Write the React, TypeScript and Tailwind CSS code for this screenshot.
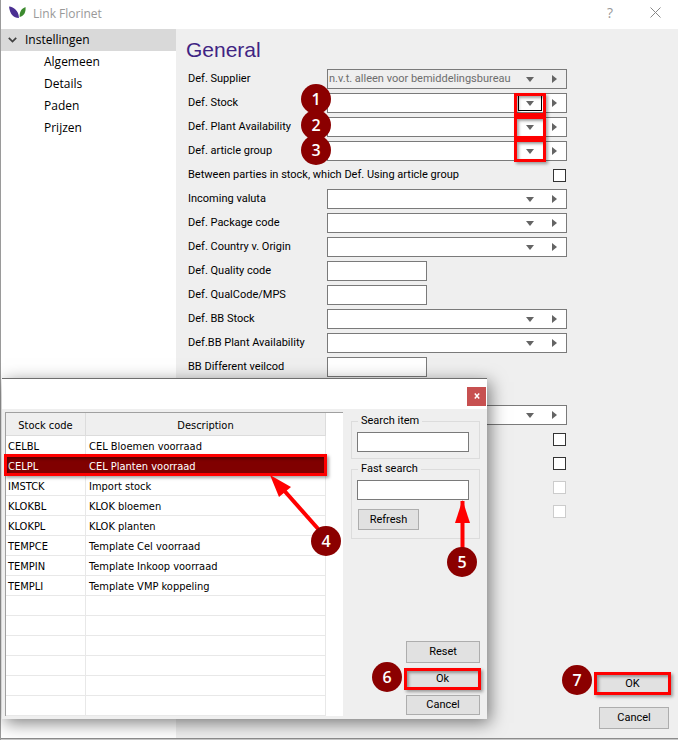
import React from "react";

type Row = {
  id: string;
  label?: string;
  name?: string;
  kind: "combo" | "text" | "check" | "none";
  value?: string;
  disabled?: boolean;
  active?: boolean;
  marked?: boolean;
};

const rows: Row[] = [
  { id: "supplier", label: "Def. Supplier", kind: "combo", value: "n.v.t. alleen voor bemiddelingsbureau", disabled: true },
  { id: "stock", label: "Def. Stock", kind: "combo", active: true, marked: true },
  { id: "plant", label: "Def. Plant Availability", kind: "combo" },
  { id: "article", label: "Def. article group", kind: "combo" },
  { id: "between", label: "Between parties in stock, which Def. Using article group", kind: "check" },
  { id: "valuta", label: "Incoming valuta", kind: "combo" },
  { id: "package", label: "Def. Package code", kind: "combo" },
  { id: "country", label: "Def. Country v. Origin", kind: "combo" },
  { id: "quality", label: "Def. Quality code", kind: "text" },
  { id: "qualmps", label: "Def. QualCode/MPS", kind: "text" },
  { id: "bbstock", label: "Def. BB Stock", kind: "combo" },
  { id: "bbplant", label: "Def.BB Plant Availability", kind: "combo" },
  { id: "veilcod", label: "BB Different veilcod", kind: "text" },
  { id: "spacer", kind: "none" },
  { id: "extra", name: "Extra setting", kind: "combo" },
  { id: "opt1", name: "Option 1", kind: "check" },
  { id: "opt2", name: "Option 2", kind: "check" },
  { id: "opt3", name: "Option 3", kind: "check", disabled: true },
  { id: "opt4", name: "Option 4", kind: "check", disabled: true },
];

const stock = [
  ["CELBL", "CEL Bloemen voorraad"],
  ["CELPL", "CEL Planten voorraad"],
  ["IMSTCK", "Import stock"],
  ["KLOKBL", "KLOK bloemen"],
  ["KLOKPL", "KLOK planten"],
  ["TEMPCE", "Template Cel voorraad"],
  ["TEMPIN", "Template Inkoop voorraad"],
  ["TEMPLI", "Template VMP koppeling"],
  ["", ""],
  ["", ""],
  ["", ""],
  ["", ""],
  ["", ""],
  ["", ""],
];

const markShadow =
  "border-3 border-[#ff0000] shadow-[2px_2px_3px_rgba(0,0,0,0.35),inset_2px_2px_3px_rgba(0,0,0,0.35)]";

function Badge({ n, className }: { n: number; className: string }) {
  return (
    <span
      className={`pointer-events-none absolute z-20 flex size-[30px] items-center justify-center rounded-full bg-[#8b0000] font-['Open_Sans',sans-serif] text-base font-semibold text-white ${className}`}
    >
      {n}
    </span>
  );
}

function Combo({ row }: { row: Row }) {
  return (
    <div
      className={`relative flex h-5 w-[240px] border border-[#7a7a7a] ${row.disabled ? "bg-[#efefef]" : "bg-white"}`}
    >
      <select
        id={row.id}
        aria-label={row.name}
        disabled={row.disabled}
        className="min-w-0 flex-1 appearance-none bg-transparent pl-px text-[11px] leading-4 text-[#6d6d6d] opacity-100 outline-none"
      >
        <option>{row.value ?? ""}</option>
      </select>
      <span
        className={`pointer-events-none absolute top-px right-6 flex h-4 w-6 items-center justify-center ${row.active ? "border border-black" : ""}`}
      >
        <svg width="8" height="5" viewBox="0 0 8 5">
          <path d="M0 0h8L4 5z" fill="#646464" />
        </svg>
      </span>
      <button type="button" aria-label="Open" className="flex w-6 items-center justify-center">
        <svg width="5" height="8" viewBox="0 0 5 8">
          <path d="M0 0v8l5-4z" fill="#646464" />
        </svg>
      </button>
      {row.marked && (
        <span className="pointer-events-none absolute -top-px right-5 z-10 flex w-8 flex-col">
          <span className={`h-[23px] ${markShadow}`} />
          <span className={`h-[23px] ${markShadow}`} />
          <span className={`h-[23px] ${markShadow}`} />
        </span>
      )}
    </div>
  );
}

function Field({ row }: { row: Row }) {
  return (
    <div className="flex h-6 w-[379px] items-center">
      {row.label && (
        <label htmlFor={row.id} className="w-[139px] shrink-0 whitespace-nowrap">
          {row.label}
        </label>
      )}
      <div className={`flex ${row.kind === "text" ? "" : "ml-auto"}`}>
        {row.kind === "combo" && <Combo row={row} />}
        {row.kind === "text" && (
          <input id={row.id} type="text" className="h-5 w-[100px] border border-[#7a7a7a] bg-white px-1" />
        )}
        {row.kind === "check" && (
          <input
            id={row.id}
            type="checkbox"
            aria-label={row.name}
            disabled={row.disabled}
            className="mr-px size-[13px] appearance-none border border-[#333333] bg-white disabled:border-[#cccccc]"
          />
        )}
      </div>
    </div>
  );
}

function PushButton({ children, className }: { children: string; className: string }) {
  return (
    <button type="button" className={`border border-[#adadad] bg-[#e1e1e1] ${className}`}>
      {children}
    </button>
  );
}

function StockDialog() {
  return (
    <section
      aria-label="Stock"
      className="absolute top-[378px] left-px w-[485px] border-t border-[#6e6e6e] bg-[#efefef] shadow-[3px_4px_16px_rgba(0,0,0,0.5)]"
    >
      <div className="flex h-[30px] items-center justify-end bg-white pr-px pt-1">
        <button
          type="button"
          aria-label="Close dialog"
          className="flex size-[19px] items-center justify-center bg-[#c75050]"
        >
          <svg width="6" height="6" viewBox="0 0 6 6">
            <path d="M0.8 0.5L5.2 5.5M5.2 0.5L0.8 5.5" stroke="#fff" strokeWidth="1.5" />
          </svg>
        </button>
      </div>
      <div className="flex pt-[3px] pb-[3px] pl-[3px]">
        <div className="w-[338px] border-t border-l border-[#a0a0a0] bg-white">
          <table className="w-[320px] table-fixed border-separate border-spacing-0 font-['DejaVu_Sans_Condensed','DejaVu_Sans',sans-serif] text-[11px]">
            <thead>
              <tr className="h-[23px]">
                <th className="w-20 border-r border-b border-[#dcdcdc] bg-[#efefef] p-0 pt-[3px] leading-4 font-normal">
                  Stock code
                </th>
                <th className="border-r border-b border-[#dcdcdc] bg-[#efefef] p-0 pt-[3px] leading-4 font-normal">
                  Description
                </th>
              </tr>
            </thead>
            <tbody>
              {stock.map(([code, text], i) => (
                <tr
                  key={i}
                  className={`h-5 ${i === 1 ? "border-[#800000] bg-[#800000] text-white" : "border-[#e8e8e8]"}`}
                >
                  <td className="border-r border-b border-inherit p-0 pt-[2px] pl-[2px] leading-4">{code}</td>
                  <td className="border-r border-b border-inherit p-0 pt-[2px] pl-[3px] leading-4">{text}</td>
                </tr>
              ))}
            </tbody>
          </table>
        </div>
        <div className="flex flex-1 flex-col pt-px pr-[7px] pl-2">
          <fieldset className="h-[46px] border border-[#dcdcdc] pl-[5px]">
            <legend className="ml-px px-[3px] leading-4">
              <label htmlFor="search-item">Search item</label>
            </legend>
            <input id="search-item" type="text" className="mt-[3px] block h-5 w-28 border border-[#7a7a7a] bg-white px-1" />
          </fieldset>
          <fieldset className="mt-[2px] h-[78px] border border-[#dcdcdc] pl-[5px]">
            <legend className="ml-px px-[3px] leading-4">
              <label htmlFor="fast-search">Fast search</label>
            </legend>
            <input id="fast-search" type="text" className="mt-[3px] block h-5 w-28 border border-[#7a7a7a] bg-white px-1" />
            <PushButton className="mt-[9px] ml-px block h-[21px] w-[61px]">Refresh</PushButton>
          </fieldset>
          <div className="mt-auto flex flex-col items-end gap-[5px] pb-px">
            <PushButton className="h-[22px] w-[74px]">Reset</PushButton>
            <div className="relative -mr-px flex">
              <PushButton className="h-[22px] w-[77px]">Ok</PushButton>
              <span className={`pointer-events-none absolute inset-0 ${markShadow}`} />
              <Badge n={6} className="-top-[6px] right-[79px]" />
            </div>
            <PushButton className="h-5 w-[74px]">Cancel</PushButton>
          </div>
        </div>
      </div>
      <span className={`pointer-events-none absolute top-[75px] left-[2px] h-[22px] w-[323px] ${markShadow}`} />
      <svg className="pointer-events-none absolute top-0 left-0 z-10" width="485" height="200" viewBox="0 0 485 200">
        <path d="M318 152L279 108" stroke="#ff0000" strokeWidth="4" />
        <path d="M268 96L289 108L277 118z" fill="#ff0000" />
        <path d="M460.500 170V122" stroke="#ff0000" strokeWidth="4" />
        <path d="M460.500 121L468 144H453z" fill="#ff0000" />
      </svg>
      <Badge n={4} className="top-[147px] left-[309px]" />
      <Badge n={5} className="top-[168px] left-[445px]" />
    </section>
  );
}

export default function App() {
  return (
    <div className="relative flex min-h-screen flex-col border-l border-[#9a9a9a] bg-[#c8c8c8] pb-px font-['Roboto','Liberation_Sans',sans-serif] text-[11px] leading-4 text-black">
      <header className="flex h-[29px] items-center bg-white pr-[17px] pl-2 font-['Open_Sans',sans-serif] text-xs text-[#999999]">
        <svg width="17" height="13" viewBox="0 0 17 13" className="mb-1">
          <path d="M0 0.500C5 1 9.500 4.500 10 12C4 12 1 8 0 0.500z" fill="#4a2f92" />
          <path d="M16.500 1C12.500 2.500 10.500 5.500 10.600 11C15 10 17 6.500 16.500 1z" fill="#3c8a2e" />
        </svg>
        <h1 className="mb-[2px] ml-[7px]">Link Florinet</h1>
        <div className="ml-auto mb-1 flex items-center gap-[37px]">
          <button type="button" aria-label="Help" className="text-sm leading-5">
            ?
          </button>
          <button type="button" aria-label="Close">
            <svg width="11" height="11" viewBox="0 0 11 11" className="block">
              <path d="M0.500 0.500L10.500 10.500M10.500 0.500L0.500 10.500" stroke="#888888" />
            </svg>
          </button>
        </div>
      </header>
      <div className="flex flex-1 border-b border-[#8c8c8c]">
        <nav className="w-[175px] shrink-0 bg-white font-['Open_Sans',sans-serif] text-xs">
          <button type="button" className="flex h-[22px] w-full items-center gap-2 bg-[#d9d9d9] pl-[7px]">
            <svg width="9" height="6" viewBox="0 0 9 6">
              <path d="M0.800 0.800L4.500 4.500L8.200 0.800" fill="none" stroke="#404040" strokeWidth="1.700" />
            </svg>
            Instellingen
          </button>
          <ul className="pl-[43px]">
            {["Algemeen", "Details", "Paden", "Prijzen"].map((t) => (
              <li key={t} className="flex h-[22px] items-center">
                <a href="#">{t}</a>
              </li>
            ))}
          </ul>
        </nav>
        <main className="relative flex flex-1 flex-col bg-[#efefef] pt-[7px] pl-3">
          <h2 className="-ml-[2px] mb-[3px] font-['Liberation_Sans',sans-serif] text-[21px] leading-7 text-[#3f2483]">
            General
          </h2>
          <form>
            {rows.map((r) => (
              <Field key={r.id} row={r} />
            ))}
          </form>
          <Badge n={1} className="top-[55px] left-[125px]" />
          <Badge n={2} className="top-[81px] left-[125px]" />
          <Badge n={3} className="top-[106px] left-[125px]" />
          <div className="mt-auto flex flex-col items-end gap-3 pr-[9px] pb-[9px]">
            <div className="relative -mr-[2px] flex">
              <PushButton className="h-[23px] w-[77px]">OK</PushButton>
              <span className={`pointer-events-none absolute inset-0 ${markShadow}`} />
              <Badge n={7} className="-top-[7px] right-[79px]" />
            </div>
            <PushButton className="h-[22px] w-[70px]">Cancel</PushButton>
          </div>
        </main>
      </div>
      <StockDialog />
    </div>
  );
}
